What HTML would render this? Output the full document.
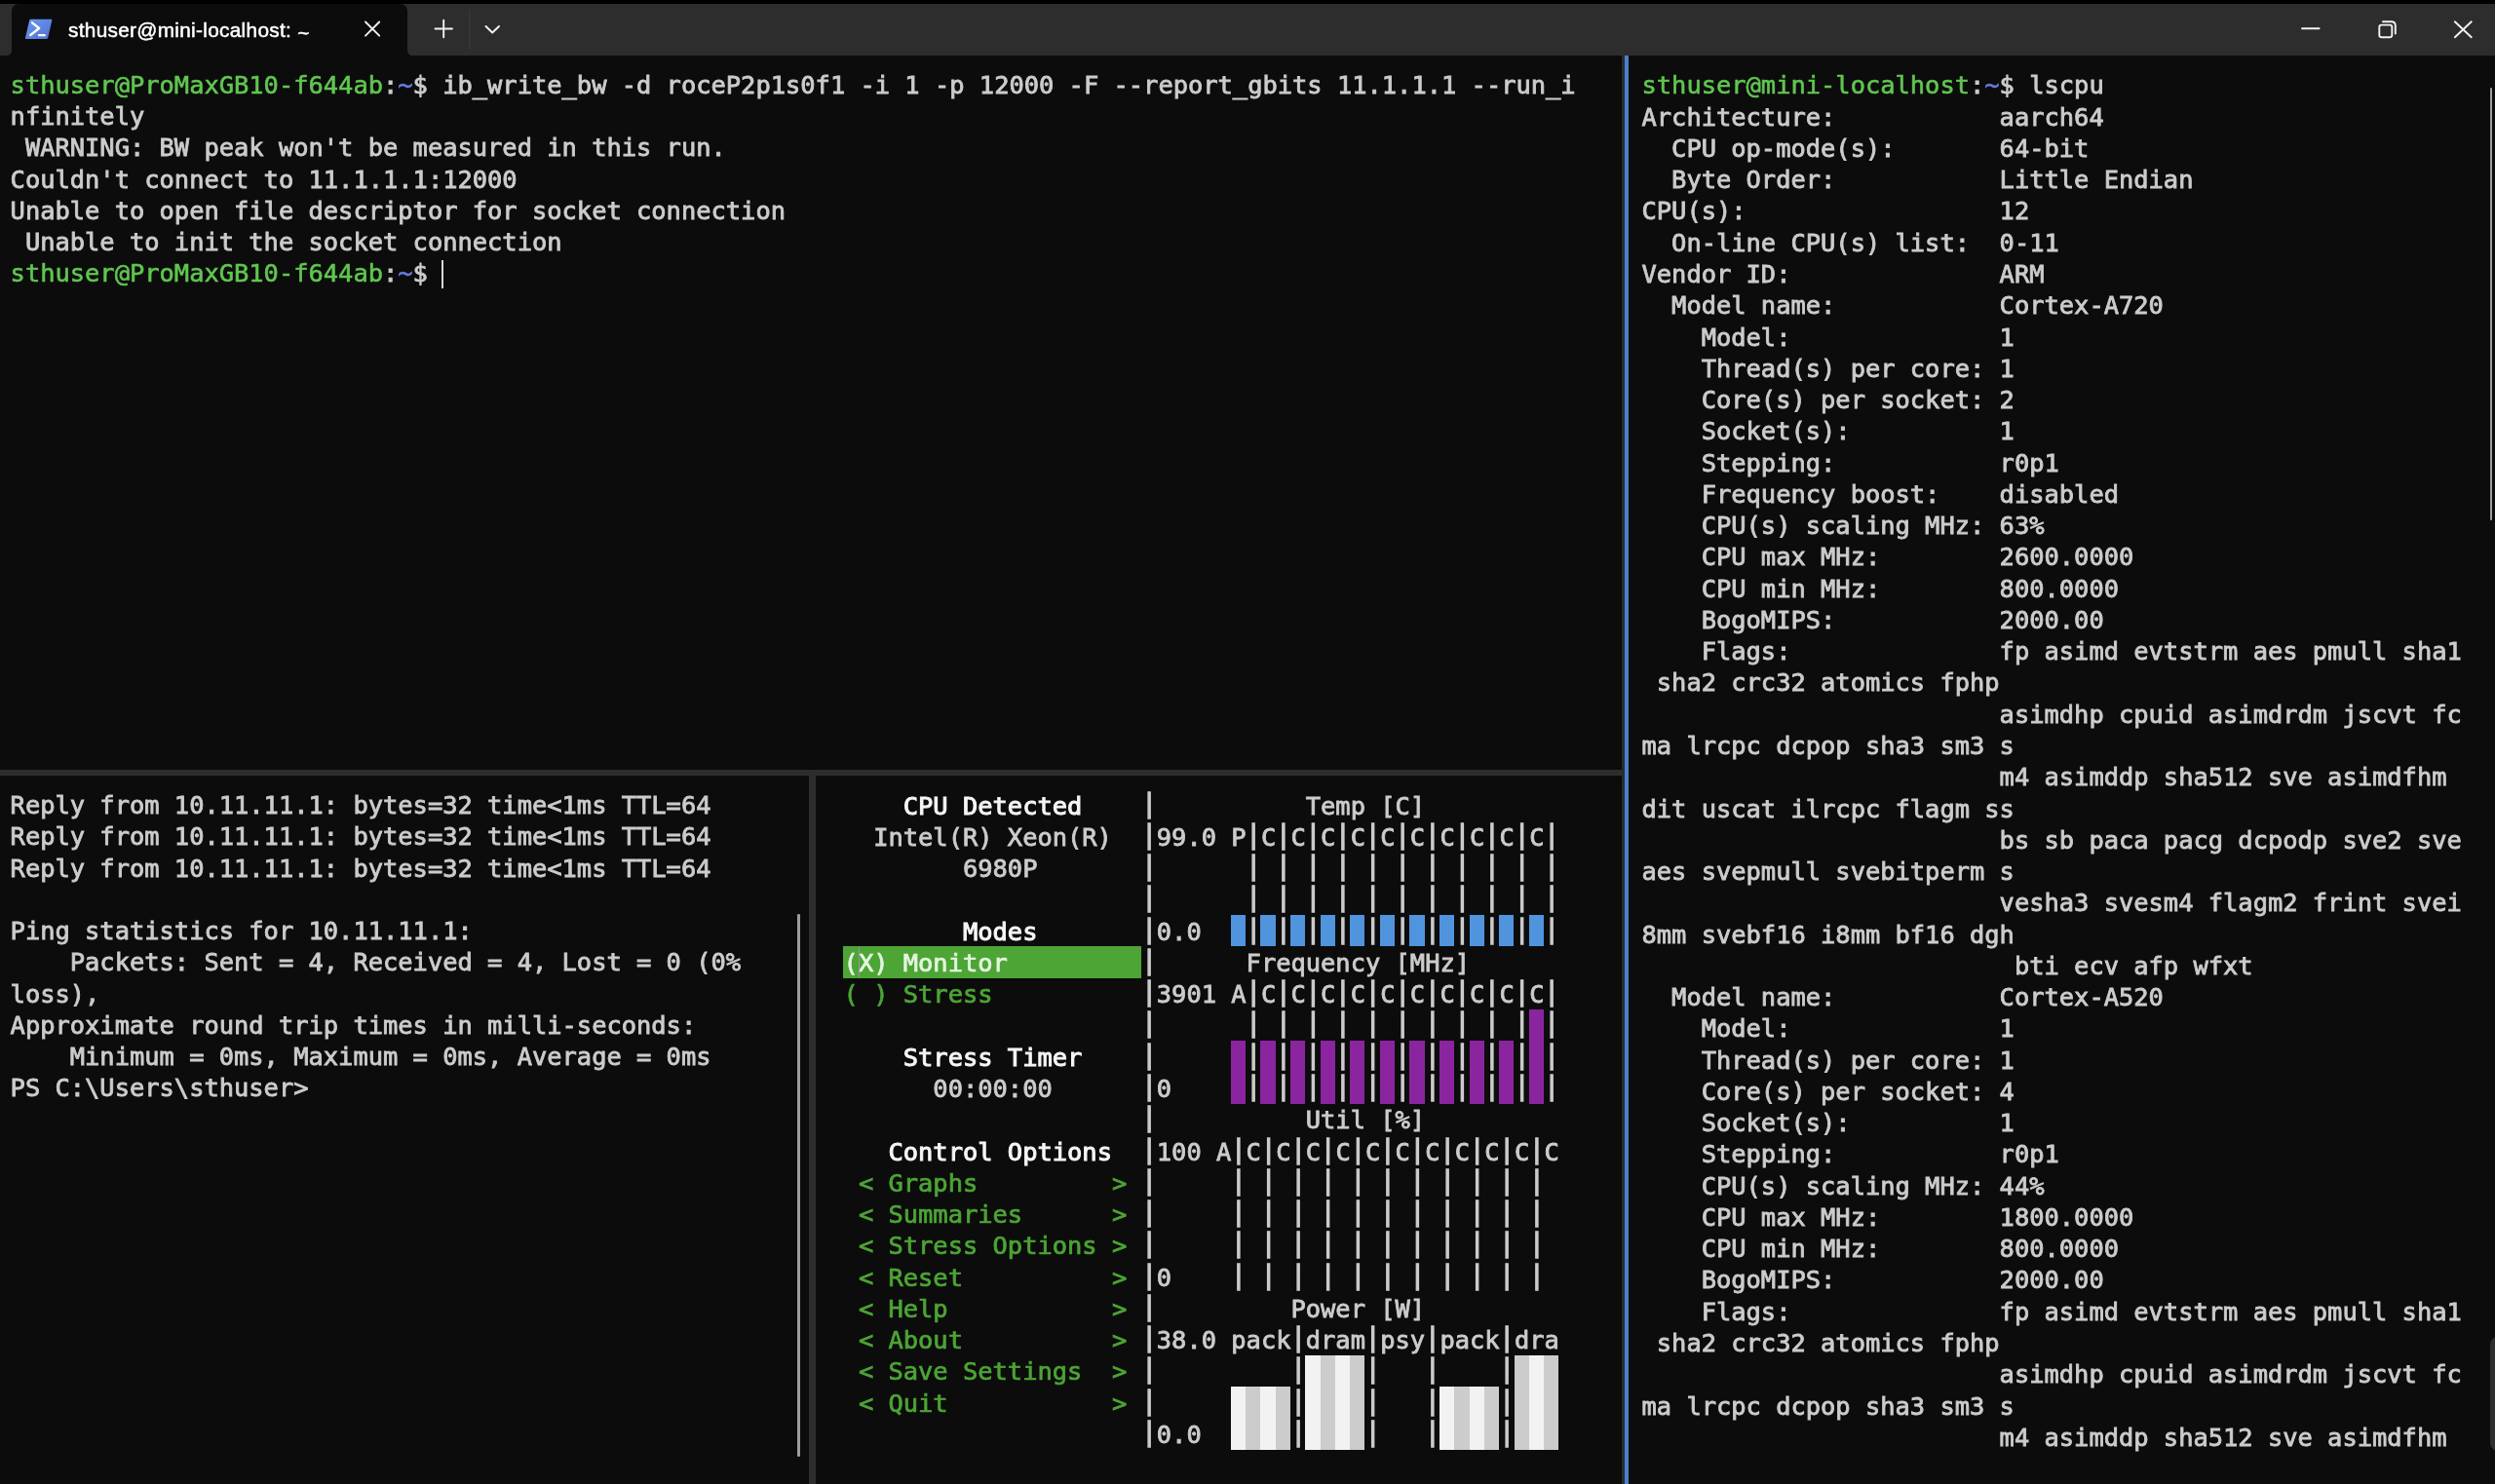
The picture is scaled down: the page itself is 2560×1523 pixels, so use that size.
<!DOCTYPE html>
<html lang="en">
<head>
<meta charset="utf-8">
<title>sthuser@mini-localhost: ~</title>
<style>
html,body{margin:0;padding:0;background:#0c0c0c;}
body{width:2560px;height:1523px;overflow:hidden;position:relative;}
#win{position:absolute;left:0;top:0;width:2560px;height:1523px;background:#0c0c0c;overflow:hidden;}
#txt{position:absolute;left:0;top:0;width:2560px;height:1523px;will-change:transform;}
.r{position:absolute;white-space:pre;height:32.265px;line-height:32.265px;
   font-family:"DejaVu Sans Mono","Liberation Mono",monospace;font-size:25.413px;
   color:#cccccc;letter-spacing:0;font-kerning:none;font-variant-ligatures:none;-webkit-text-stroke:0.85px currentColor;transform:scaleY(0.97);transform-origin:0 24.9px;}
.g{color:#60c650;-webkit-text-stroke:0.6px currentColor}
.b{color:#647de6;-webkit-text-stroke:0.6px currentColor}
.w{color:#f6f6f6;-webkit-text-stroke:1.0px currentColor}
.mg{color:#4ca535;-webkit-text-stroke:0.75px currentColor}
.hl{color:#e4f5de;-webkit-text-stroke:0.75px currentColor}
.pr{transform:translateY(-2.85px) scaleY(1.077);-webkit-text-stroke:1.3px currentColor}
.blk{position:absolute}
#topstrip{position:absolute;left:0;top:0;width:2560px;height:4px;background:#000}
#titlebar{position:absolute;left:0;top:4px;width:2560px;height:53px;background:#2d2d2d}
#tab{position:absolute;left:11.5px;top:4px;width:406.5px;height:53px;background:#0c0c0c;border-radius:7px 7px 0 0}
#tabl{position:absolute;left:6.5px;top:52px;width:5px;height:5px;background:radial-gradient(circle at 0 0,#2d2d2d 4.6px,#0c0c0c 5.2px)}
#tabr{position:absolute;left:418px;top:52px;width:5px;height:5px;background:radial-gradient(circle at 100% 0,#2d2d2d 4.6px,#0c0c0c 5.2px)}
#tabtitle{position:absolute;left:70px;top:15.2px;height:32px;line-height:32px;white-space:pre;
  font-family:"Liberation Sans",sans-serif;font-size:20.8px;color:#ffffff;transform-origin:0 50%;letter-spacing:0.3px;-webkit-text-stroke:0.5px #ffffff;}
.hdiv{position:absolute;background:#2d2d2d}
svg{position:absolute;overflow:visible}
</style>
</head>
<body>
<div id="win">
<div id="topstrip"></div>
<div id="titlebar"></div>
<div id="tab"></div><div id="tabl"></div><div id="tabr"></div>
<svg id="psicon" style="left:0;top:0" width="70" height="57" viewBox="0 0 70 57">
  <defs><linearGradient id="psg" x1="0" y1="0" x2="1" y2="1"><stop offset="0" stop-color="#6a98f0"/><stop offset="1" stop-color="#4f74d0"/></linearGradient></defs>
  <path d="M31.6 19.7 H52.4 Q53.6 19.7 53.3 20.9 L49.2 38.8 Q48.9 39.9 47.8 39.9 H26.9 Q25.7 39.9 26 38.7 L30.2 20.8 Q30.5 19.7 31.6 19.7 Z" fill="url(#psg)"/>
  <path d="M33 23.3 L40.2 29 L31.2 36" fill="none" stroke="#ffffff" stroke-width="2.3" stroke-linecap="round" stroke-linejoin="round"/>
  <path d="M40 36.2 H45.8" fill="none" stroke="#ffffff" stroke-width="2.2" stroke-linecap="round"/>
</svg>
<svg style="left:0;top:0" width="2560" height="57" viewBox="0 0 2560 57" fill="none" stroke="#f2f2f2" stroke-width="1.9" stroke-linecap="round" stroke-linejoin="round">
  <path d="M375 22.5 L389.2 36.7 M389.2 22.5 L375 36.7"/>
  <path d="M446.5 29.5 H464 M455.2 20.8 V38.3"/>
  <path d="M482 10 V50.5" stroke="#3b3b3b" stroke-width="1.2"/>
  <path d="M498.5 27 L505.2 33.5 L512 27"/>
  <path d="M2362 29.3 H2379.6"/>
  <rect x="2441.3" y="25.6" width="13" height="12.6" rx="2.2"/>
  <path d="M2445 22.2 H2453.6 Q2457.8 22.2 2457.8 26.4 V34.6"/>
  <path d="M2518.8 22.3 L2535.8 38.2 M2535.8 22.3 L2518.8 38.2"/>
</svg>
<!-- pane dividers -->
<div class="hdiv" style="left:0;top:789.6px;width:1664px;height:6.8px"></div>
<div class="hdiv" style="left:829.8px;top:789.6px;width:7px;height:740px"></div>
<div class="hdiv" style="left:1663.6px;top:57px;width:3.6px;height:1470px;background:#2a2a2e"></div>
<div class="hdiv" style="left:1667.1px;top:57px;width:4.2px;height:1470px;background:#4a80cc"></div>
<!-- cursor in top-left pane -->
<div class="blk" style="left:453.2px;top:267px;width:1.7px;height:28.5px;background:#d8d8d8"></div>
<!-- cursor in s-tui pane -->
<div class="blk" style="left:880.6px;top:972px;width:1.6px;height:31px;background:#a08ea4;z-index:5"></div>
<!-- scrollbars -->
<div class="blk" style="left:818.2px;top:937.5px;width:2.4px;height:557px;background:#9d9d9d;border-radius:1.2px"></div>
<div class="blk" style="left:2554.9px;top:89.8px;width:2.4px;height:444.2px;background:#9d9d9d;border-radius:1.2px"></div>
<div class="blk" style="left:2555px;top:1372.4px;width:16px;height:117px;background:#2e2e2e;border-radius:9px"></div>
<div class="blk" style="left:865.00px;top:971.33px;width:306.00px;height:32.27px;background:#4ca535"></div>
<div class="blk" style="left:1262.80px;top:939.06px;width:15.30px;height:32.27px;background:#4f94dd"></div>
<div class="blk" style="left:1293.40px;top:939.06px;width:15.30px;height:32.27px;background:#4f94dd"></div>
<div class="blk" style="left:1324.00px;top:939.06px;width:15.30px;height:32.27px;background:#4f94dd"></div>
<div class="blk" style="left:1354.60px;top:939.06px;width:15.30px;height:32.27px;background:#4f94dd"></div>
<div class="blk" style="left:1385.20px;top:939.06px;width:15.30px;height:32.27px;background:#4f94dd"></div>
<div class="blk" style="left:1415.80px;top:939.06px;width:15.30px;height:32.27px;background:#4f94dd"></div>
<div class="blk" style="left:1446.40px;top:939.06px;width:15.30px;height:32.27px;background:#4f94dd"></div>
<div class="blk" style="left:1477.00px;top:939.06px;width:15.30px;height:32.27px;background:#4f94dd"></div>
<div class="blk" style="left:1507.60px;top:939.06px;width:15.30px;height:32.27px;background:#4f94dd"></div>
<div class="blk" style="left:1538.20px;top:939.06px;width:15.30px;height:32.27px;background:#4f94dd"></div>
<div class="blk" style="left:1568.80px;top:939.06px;width:15.30px;height:32.27px;background:#4f94dd"></div>
<div class="blk" style="left:1262.80px;top:1068.12px;width:15.30px;height:64.53px;background:#8a259f"></div>
<div class="blk" style="left:1293.40px;top:1068.12px;width:15.30px;height:64.53px;background:#8a259f"></div>
<div class="blk" style="left:1324.00px;top:1068.12px;width:15.30px;height:64.53px;background:#8a259f"></div>
<div class="blk" style="left:1354.60px;top:1068.12px;width:15.30px;height:64.53px;background:#8a259f"></div>
<div class="blk" style="left:1385.20px;top:1068.12px;width:15.30px;height:64.53px;background:#8a259f"></div>
<div class="blk" style="left:1415.80px;top:1068.12px;width:15.30px;height:64.53px;background:#8a259f"></div>
<div class="blk" style="left:1446.40px;top:1068.12px;width:15.30px;height:64.53px;background:#8a259f"></div>
<div class="blk" style="left:1477.00px;top:1068.12px;width:15.30px;height:64.53px;background:#8a259f"></div>
<div class="blk" style="left:1507.60px;top:1068.12px;width:15.30px;height:64.53px;background:#8a259f"></div>
<div class="blk" style="left:1538.20px;top:1068.12px;width:15.30px;height:64.53px;background:#8a259f"></div>
<div class="blk" style="left:1568.80px;top:1035.86px;width:15.30px;height:96.80px;background:#8a259f"></div>
<div class="blk" style="left:1262.80px;top:1423.03px;width:15.30px;height:64.53px;background:#f2f2f2"></div>
<div class="blk" style="left:1278.10px;top:1423.03px;width:15.30px;height:64.53px;background:#cccccc"></div>
<div class="blk" style="left:1293.40px;top:1423.03px;width:15.30px;height:64.53px;background:#f2f2f2"></div>
<div class="blk" style="left:1308.70px;top:1423.03px;width:15.30px;height:64.53px;background:#cccccc"></div>
<div class="blk" style="left:1339.30px;top:1390.77px;width:15.30px;height:96.80px;background:#f2f2f2"></div>
<div class="blk" style="left:1354.60px;top:1390.77px;width:15.30px;height:96.80px;background:#cccccc"></div>
<div class="blk" style="left:1369.90px;top:1390.77px;width:15.30px;height:96.80px;background:#f2f2f2"></div>
<div class="blk" style="left:1385.20px;top:1390.77px;width:15.30px;height:96.80px;background:#cccccc"></div>
<div class="blk" style="left:1477.00px;top:1423.03px;width:15.30px;height:64.53px;background:#f2f2f2"></div>
<div class="blk" style="left:1492.30px;top:1423.03px;width:15.30px;height:64.53px;background:#cccccc"></div>
<div class="blk" style="left:1507.60px;top:1423.03px;width:15.30px;height:64.53px;background:#f2f2f2"></div>
<div class="blk" style="left:1522.90px;top:1423.03px;width:15.30px;height:64.53px;background:#cccccc"></div>
<div class="blk" style="left:1553.50px;top:1390.77px;width:15.30px;height:96.80px;background:#cccccc"></div>
<div class="blk" style="left:1568.80px;top:1390.77px;width:15.30px;height:96.80px;background:#f2f2f2"></div>
<div class="blk" style="left:1584.10px;top:1390.77px;width:15.30px;height:96.80px;background:#cccccc"></div>
<div id="txt">
<div id="tabtitle">sthuser@mini-localhost: <span style="position:relative;top:2.8px">~</span></div>
<div class="r" style="left:10.60px;top:70.80px"><span class="g">sthuser@ProMaxGB10-f644ab</span>:<span class="b">~</span>$ ib_write_bw -d roceP2p1s0f1 -i 1 -p 12000 -F --report_gbits 11.1.1.1 --run_i</div>
<div class="r" style="left:10.60px;top:103.06px">nfinitely</div>
<div class="r" style="left:10.60px;top:135.33px"> WARNING: BW peak won't be measured in this run.</div>
<div class="r" style="left:10.60px;top:167.60px">Couldn't connect to 11.1.1.1:12000</div>
<div class="r" style="left:10.60px;top:199.86px">Unable to open file descriptor for socket connection</div>
<div class="r" style="left:10.60px;top:232.12px"> Unable to init the socket connection</div>
<div class="r" style="left:10.60px;top:264.39px"><span class="g">sthuser@ProMaxGB10-f644ab</span>:<span class="b">~</span>$ </div>
<div class="r" style="left:10.60px;top:810.10px">Reply from 10.11.11.1: bytes=32 time&lt;1ms TTL=64</div>
<div class="r" style="left:10.60px;top:842.36px">Reply from 10.11.11.1: bytes=32 time&lt;1ms TTL=64</div>
<div class="r" style="left:10.60px;top:874.63px">Reply from 10.11.11.1: bytes=32 time&lt;1ms TTL=64</div>
<div class="r" style="left:10.60px;top:939.16px">Ping statistics for 10.11.11.1:</div>
<div class="r" style="left:10.60px;top:971.42px">    Packets: Sent = 4, Received = 4, Lost = 0 (0%</div>
<div class="r" style="left:10.60px;top:1003.69px">loss),</div>
<div class="r" style="left:10.60px;top:1035.95px">Approximate round trip times in milli-seconds:</div>
<div class="r" style="left:10.60px;top:1068.22px">    Minimum = 0ms, Maximum = 0ms, Average = 0ms</div>
<div class="r" style="left:10.60px;top:1100.48px">PS C:\Users\sthuser&gt;</div>
<div class="r" style="left:1684.50px;top:71.40px"><span class="g">sthuser@mini-localhost</span>:<span class="b">~</span>$ lscpu</div>
<div class="r" style="left:1684.50px;top:103.66px">Architecture:           aarch64</div>
<div class="r" style="left:1684.50px;top:135.93px">  CPU op-mode(s):       64-bit</div>
<div class="r" style="left:1684.50px;top:168.19px">  Byte Order:           Little Endian</div>
<div class="r" style="left:1684.50px;top:200.46px">CPU(s):                 12</div>
<div class="r" style="left:1684.50px;top:232.72px">  On-line CPU(s) list:  0-11</div>
<div class="r" style="left:1684.50px;top:264.99px">Vendor ID:              ARM</div>
<div class="r" style="left:1684.50px;top:297.26px">  Model name:           Cortex-A720</div>
<div class="r" style="left:1684.50px;top:329.52px">    Model:              1</div>
<div class="r" style="left:1684.50px;top:361.79px">    Thread(s) per core: 1</div>
<div class="r" style="left:1684.50px;top:394.05px">    Core(s) per socket: 2</div>
<div class="r" style="left:1684.50px;top:426.31px">    Socket(s):          1</div>
<div class="r" style="left:1684.50px;top:458.58px">    Stepping:           r0p1</div>
<div class="r" style="left:1684.50px;top:490.84px">    Frequency boost:    disabled</div>
<div class="r" style="left:1684.50px;top:523.11px">    CPU(s) scaling MHz: 63%</div>
<div class="r" style="left:1684.50px;top:555.38px">    CPU max MHz:        2600.0000</div>
<div class="r" style="left:1684.50px;top:587.64px">    CPU min MHz:        800.0000</div>
<div class="r" style="left:1684.50px;top:619.90px">    BogoMIPS:           2000.00</div>
<div class="r" style="left:1684.50px;top:652.17px">    Flags:              fp asimd evtstrm aes pmull sha1</div>
<div class="r" style="left:1684.50px;top:684.43px"> sha2 crc32 atomics fphp</div>
<div class="r" style="left:1684.50px;top:716.70px">                        asimdhp cpuid asimdrdm jscvt fc</div>
<div class="r" style="left:1684.50px;top:748.97px">ma lrcpc dcpop sha3 sm3 s</div>
<div class="r" style="left:1684.50px;top:781.23px">                        m4 asimddp sha512 sve asimdfhm</div>
<div class="r" style="left:1684.50px;top:813.50px">dit uscat ilrcpc flagm ss</div>
<div class="r" style="left:1684.50px;top:845.76px">                        bs sb paca pacg dcpodp sve2 sve</div>
<div class="r" style="left:1684.50px;top:878.02px">aes svepmull svebitperm s</div>
<div class="r" style="left:1684.50px;top:910.29px">                        vesha3 svesm4 flagm2 frint svei</div>
<div class="r" style="left:1684.50px;top:942.55px">8mm svebf16 i8mm bf16 dgh</div>
<div class="r" style="left:1684.50px;top:974.82px">                         bti ecv afp wfxt</div>
<div class="r" style="left:1684.50px;top:1007.09px">  Model name:           Cortex-A520</div>
<div class="r" style="left:1684.50px;top:1039.35px">    Model:              1</div>
<div class="r" style="left:1684.50px;top:1071.62px">    Thread(s) per core: 1</div>
<div class="r" style="left:1684.50px;top:1103.88px">    Core(s) per socket: 4</div>
<div class="r" style="left:1684.50px;top:1136.14px">    Socket(s):          1</div>
<div class="r" style="left:1684.50px;top:1168.41px">    Stepping:           r0p1</div>
<div class="r" style="left:1684.50px;top:1200.67px">    CPU(s) scaling MHz: 44%</div>
<div class="r" style="left:1684.50px;top:1232.94px">    CPU max MHz:        1800.0000</div>
<div class="r" style="left:1684.50px;top:1265.20px">    CPU min MHz:        800.0000</div>
<div class="r" style="left:1684.50px;top:1297.47px">    BogoMIPS:           2000.00</div>
<div class="r" style="left:1684.50px;top:1329.73px">    Flags:              fp asimd evtstrm aes pmull sha1</div>
<div class="r" style="left:1684.50px;top:1362.00px"> sha2 crc32 atomics fphp</div>
<div class="r" style="left:1684.50px;top:1394.26px">                        asimdhp cpuid asimdrdm jscvt fc</div>
<div class="r" style="left:1684.50px;top:1426.53px">ma lrcpc dcpop sha3 sm3 s</div>
<div class="r" style="left:1684.50px;top:1458.79px">                        m4 asimddp sha512 sve asimdfhm</div>
<div class="r" style="left:850.30px;top:810.60px">     <span class="w">CPU Detected</span>               Temp [C]</div>
<div class="r pr" style="left:850.30px;top:810.60px">                     |</div>
<div class="r" style="left:850.30px;top:842.86px">   Intel(R) Xeon(R)   99.0 P C C C C C C C C C C</div>
<div class="r pr" style="left:850.30px;top:842.86px">                     |      | | | | | | | | | | |</div>
<div class="r" style="left:850.30px;top:875.13px">         6980P</div>
<div class="r pr" style="left:850.30px;top:875.13px">                     |      | | | | | | | | | | |</div>
<div class="r pr" style="left:850.30px;top:907.39px">                     |      | | | | | | | | | | |</div>
<div class="r" style="left:850.30px;top:939.66px">         <span class="w">Modes</span>        0.0</div>
<div class="r pr" style="left:850.30px;top:939.66px">                     |      | | | | | | | | | | |</div>
<div class="r" style="left:850.30px;top:971.92px"> <span class="hl">(X) Monitor         </span>       Frequency [MHz]</div>
<div class="r pr" style="left:850.30px;top:971.92px">                     |</div>
<div class="r" style="left:850.30px;top:1004.19px"> <span class="mg">( ) Stress</span>           3901 A C C C C C C C C C C</div>
<div class="r pr" style="left:850.30px;top:1004.19px">                     |      | | | | | | | | | | |</div>
<div class="r pr" style="left:850.30px;top:1036.45px">                     |      | | | | | | | | | | |</div>
<div class="r" style="left:850.30px;top:1068.72px">     <span class="w">Stress Timer</span></div>
<div class="r pr" style="left:850.30px;top:1068.72px">                     |      | | | | | | | | | | |</div>
<div class="r" style="left:850.30px;top:1100.98px">       00:00:00       0</div>
<div class="r pr" style="left:850.30px;top:1100.98px">                     |      | | | | | | | | | | |</div>
<div class="r" style="left:850.30px;top:1133.25px">                                Util [%]</div>
<div class="r pr" style="left:850.30px;top:1133.25px">                     |</div>
<div class="r" style="left:850.30px;top:1165.51px">    <span class="w">Control Options</span>   100 A C C C C C C C C C C C</div>
<div class="r pr" style="left:850.30px;top:1165.51px">                     |     | | | | | | | | | | |</div>
<div class="r" style="left:850.30px;top:1197.78px">  <span class="mg">&lt; Graphs         &gt;</span></div>
<div class="r pr" style="left:850.30px;top:1197.78px">                     |     | | | | | | | | | | |</div>
<div class="r" style="left:850.30px;top:1230.04px">  <span class="mg">&lt; Summaries      &gt;</span></div>
<div class="r pr" style="left:850.30px;top:1230.04px">                     |     | | | | | | | | | | |</div>
<div class="r" style="left:850.30px;top:1262.31px">  <span class="mg">&lt; Stress Options &gt;</span></div>
<div class="r pr" style="left:850.30px;top:1262.31px">                     |     | | | | | | | | | | |</div>
<div class="r" style="left:850.30px;top:1294.58px">  <span class="mg">&lt; Reset          &gt;</span>  0</div>
<div class="r pr" style="left:850.30px;top:1294.58px">                     |     | | | | | | | | | | |</div>
<div class="r" style="left:850.30px;top:1326.84px">  <span class="mg">&lt; Help           &gt;</span>           Power [W]</div>
<div class="r pr" style="left:850.30px;top:1326.84px">                     |</div>
<div class="r" style="left:850.30px;top:1359.10px">  <span class="mg">&lt; About          &gt;</span>  38.0 pack dram psy pack dra</div>
<div class="r pr" style="left:850.30px;top:1359.10px">                     |         |    |   |    |</div>
<div class="r" style="left:850.30px;top:1391.37px">  <span class="mg">&lt; Save Settings  &gt;</span></div>
<div class="r pr" style="left:850.30px;top:1391.37px">                     |         |    |   |    |</div>
<div class="r" style="left:850.30px;top:1423.63px">  <span class="mg">&lt; Quit           &gt;</span></div>
<div class="r pr" style="left:850.30px;top:1423.63px">                     |         |    |   |    |</div>
<div class="r" style="left:850.30px;top:1455.90px">                      0.0</div>
<div class="r pr" style="left:850.30px;top:1455.90px">                     |         |    |   |    |</div>
</div>
</div>
</body>
</html>
